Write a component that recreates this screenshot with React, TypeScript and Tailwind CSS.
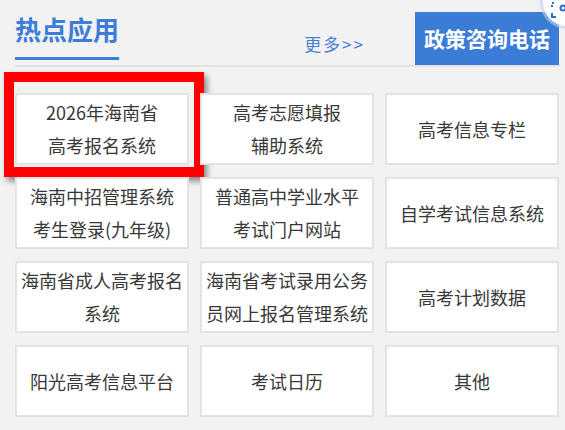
import React from 'react';

type Link = { lines: string[] };

const links: Link[] = [
  { lines: ['2026年海南省', '高考报名系统'] },
  { lines: ['高考志愿填报', '辅助系统'] },
  { lines: ['高考信息专栏'] },
  { lines: ['海南中招管理系统', '考生登录(九年级)'] },
  { lines: ['普通高中学业水平', '考试门户网站'] },
  { lines: ['自学考试信息系统'] },
  { lines: ['海南省成人高考报名', '系统'] },
  { lines: ['海南省考试录用公务', '员网上报名管理系统'] },
  { lines: ['高考计划数据'] },
  { lines: ['阳光高考信息平台'] },
  { lines: ['考试日历'] },
  { lines: ['其他'] },
];

function ScanButton() {
  return (
    <div className="absolute right-[-26px] top-[-22px] flex h-[48px] w-[48px] items-center justify-center rounded-full bg-white shadow-[0_0_0_3px_rgba(190,210,240,0.6)]">
      <svg width="20" height="20" viewBox="0 0 20 20" className="ml-[-14px] mt-[16px]" fill="none" stroke="#2f6fd0" strokeWidth="2">
        <path d="M2 7V3h4" strokeDasharray="2 2" />
        <path d="M2 13v4h4" />
        <circle cx="13" cy="8" r="2.5" />
      </svg>
    </div>
  );
}

export default function App() {
  return (
    <div
      className="relative h-[430px] w-[565px] overflow-hidden bg-[#f2f2f2] pl-[15px] pr-[6px]"
      style={{ fontFamily: '"Microsoft YaHei", "Noto Sans CJK SC", "Noto Sans", sans-serif' }}
    >
      <div className="flex h-[67px] items-end justify-between border-b-2 border-[#e2e2e2]">
        <div className="flex h-full flex-col justify-end">
          <h2 className="text-[26px] font-bold leading-[30px] text-[#3b7dd8]">热点应用</h2>
          <div className="mb-[5px] mt-[13px] h-[3px] w-[104px] bg-[#3b7dd8]" />
        </div>
        <div className="flex items-end">
          <a className="mb-[13px] mr-[50px] text-[17px] leading-none tracking-[2px] text-[#4a80d2]">更多&gt;&gt;</a>
          <button className="flex h-[53px] w-[144px] items-center justify-center bg-[#3a7cd6] text-[21px] font-bold text-white">
            政策咨询电话
          </button>
        </div>
      </div>

      <div className="mt-[26px] grid grid-cols-3 gap-x-[11px] gap-y-[12px]">
        {links.map((item, i) => (
          <div
            key={i}
            className="relative flex h-[72px] flex-col items-center justify-center border-2 border-[#e3e3e3] bg-white text-center text-[18px] leading-[33px] text-[#383838]"
          >
            {item.lines.map((line) => (
              <span key={line} className="whitespace-nowrap">{line}</span>
            ))}
            {i === 0 && (
              <div className="pointer-events-none absolute bottom-[-14px] left-[-13px] right-[-17px] top-[-23px] border-[10px] border-[#ff0000] shadow-[3px_4px_6px_rgba(0,0,0,0.45)]" />
            )}
          </div>
        ))}
      </div>

      <ScanButton />
    </div>
  );
}
